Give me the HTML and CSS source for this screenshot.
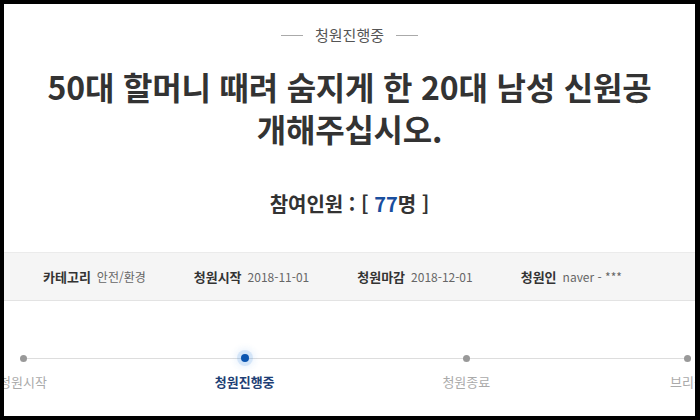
FILE: index.html
```html
<!DOCTYPE html>
<html lang="ko">
<head>
  <meta charset="utf-8">
  <title>청원진행중</title>
  <link rel="stylesheet" href="styles.css">
</head>
<body>
  <div class="frame">
    <div class="status">
      <span class="dash"></span>
      <span>청원진행중</span>
      <span class="dash"></span>
    </div>

    <h1 class="title">50대 할머니 때려 숨지게 한 20대 남성 신원공<br>개해주십시오.</h1>

    <p class="count">참여인원 : [ <span class="num">77</span>명 ]</p>

    <ul class="info">
      <li><b>카테고리</b> <span>안전/환경</span></li>
      <li><b>청원시작</b> <span>2018-11-01</span></li>
      <li><b>청원마감</b> <span>2018-12-01</span></li>
      <li><b>청원인</b> <span>naver - ***</span></li>
    </ul>

    <ol class="steps">
      <li class="step"><i class="dot"></i><span>청원시작</span></li>
      <li class="step on"><i class="dot"></i><span>청원진행중</span></li>
      <li class="step"><i class="dot"></i><span>청원종료</span></li>
      <li class="step"><i class="dot"></i><span>브리핑</span></li>
    </ol>
  </div>
</body>
</html>
```

FILE: styles.css
```css
html, body {
  margin: 0;
  height: 100%;
}

body {
  background: #000;
  padding: 4px 5px 4px 4px;
  box-sizing: border-box;
  font-family: "Noto Sans CJK KR", "Noto Sans", sans-serif;
}

.frame {
  background: #fff;
  height: 100%;
  overflow: hidden;
  padding-top: 21px;
  box-sizing: border-box;
}

.status {
  display: flex;
  justify-content: center;
  align-items: center;
  gap: 12px;
  font-size: 15px;
  line-height: 20px;
  color: #555;
}

.dash {
  width: 22px;
  border-top: 1px solid #aaa;
}

.title {
  margin: 20px 0 0;
  text-align: center;
  font-size: 32px;
  line-height: 42px;
  font-weight: bold;
  color: #333;
  letter-spacing: -0.2px;
}

.count {
  margin: 41px 0 0;
  text-align: center;
  font-size: 20px;
  line-height: 28px;
  font-weight: bold;
  color: #333;
}

.count .num {
  color: #1a4e9e;
}

.info {
  list-style: none;
  margin: 34px 0 0;
  padding: 0 0 0 39px;
  height: 47px;
  display: flex;
  align-items: center;
  gap: 48px;
  background: #f5f5f5;
  border-top: 1px solid #ebebeb;
  border-bottom: 1px solid #e3e3e3;
  font-size: 12px;
}

.info li {
  display: flex;
  gap: 6px;
  align-items: baseline;
}

.info b {
  color: #333;
  font-size: 13px;
}

.info span {
  color: #666;
}

.steps {
  list-style: none;
  position: relative;
  margin: 54px 0 0 -21px;
  padding: 0;
  width: 745px;
  display: flex;
  justify-content: space-between;
}

.steps::before {
  content: "";
  position: absolute;
  left: 40px;
  right: 40px;
  top: 3px;
  border-top: 1px solid #ddd;
}

.step {
  width: 80px;
  display: flex;
  flex-direction: column;
  align-items: center;
  gap: 11px;
  font-size: 13px;
  line-height: 18px;
  color: #aaa;
}

.dot {
  position: relative;
  width: 7px;
  height: 7px;
  border-radius: 50%;
  background: #999;
}

.step.on {
  color: #1e3f75;
  font-weight: bold;
}

.step.on .dot {
  width: 8px;
  height: 8px;
  margin-top: -1px;
  background: #0b55b0;
  box-shadow: 0 0 0 4px rgba(60, 140, 230, 0.15), 0 0 6px 6px rgba(60, 140, 230, 0.1);
}
```
